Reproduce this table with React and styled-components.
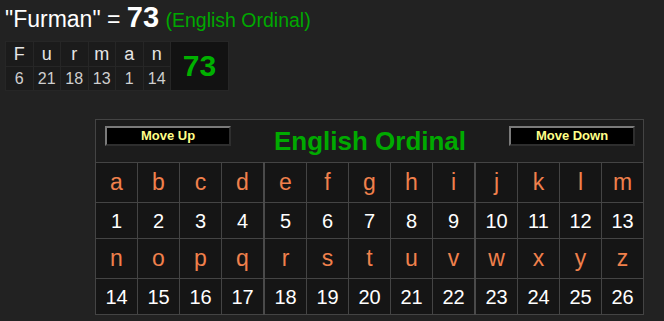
import React from "react";
import styled, { createGlobalStyle } from "styled-components";

const Global = createGlobalStyle`
  html, body {
    margin: 0;
    background: #222222;
    font-family: "Liberation Sans", Arial, sans-serif;
  }
  #root {
    padding: 0 5px;
  }
`;

const Heading = styled.div`
  color: #ffffff;
  font-size: 23px;
  line-height: 34px;
  height: 36px;
  white-space: nowrap;
`;

const Total = styled.b`
  font-size: 29px;
`;

const CipherName = styled.span`
  color: #00a800;
  font-size: 19.5px;
`;

const WordTable = styled.table`
  border-collapse: collapse;
  table-layout: fixed;
  margin-top: 5px;
  background: #1b1b1b;
`;

const WordCell = styled.td`
  width: 26.5px;
  padding: 0;
  border: 1px solid #262626;
  text-align: center;
  color: ${(p) => (p.$num ? "#cfcfcf" : "#e6e6e6")};
  font-size: ${(p) => (p.$num ? "16px" : "18px")};
  height: ${(p) => (p.$num ? "23px" : "24px")};
  line-height: 1;
`;

const WordSum = styled.td`
  width: 57px;
  padding: 0;
  border: 1px solid #262626;
  background: #121212;
  color: #00b000;
  font-weight: bold;
  font-size: 30px;
  text-align: center;
`;

const Chart = styled.table`
  border-collapse: collapse;
  table-layout: fixed;
  margin: 28px 0 0 90px;
  border: 1px solid #444444;
  background: #151515;
`;

const HeaderCell = styled.td`
  padding: 0;
  background: #1c1c1c;
  border: 1px solid #444444;
`;

const HeaderBar = styled.div`
  display: flex;
  align-items: flex-start;
  height: 42px;
  padding: 0 8px 0 9px;
`;

const MoveButton = styled.button`
  flex: none;
  width: 126px;
  height: 20px;
  margin-top: 6px;
  padding: 0;
  background: #000000;
  color: #ffff88;
  font-family: "Liberation Sans", Arial, sans-serif;
  font-weight: bold;
  font-size: 13px;
  line-height: 16px;
  border-style: solid;
  border-width: 2px;
  border-color: #7a7a7a #2e2e2e #2e2e2e #7a7a7a;
  cursor: pointer;
`;

const Title = styled.div`
  flex: 1;
  text-align: center;
  color: #00aa00;
  font-weight: bold;
  font-size: 26px;
  line-height: 42px;
`;

const Cell = styled.td`
  width: 41px;
  padding: 0;
  text-align: center;
  border: 1px solid #444444;
  border-left-width: ${(p) => (p.$groupStart ? "2px" : "1px")};
  border-left-color: ${(p) => (p.$groupStart ? "#4a4a4a" : "#444444")};
  height: ${(p) => (p.$num ? "35px" : "39px")};
  color: ${(p) => (p.$num ? "#ffffff" : "#f0804c")};
  font-size: ${(p) => (p.$num ? "20px" : "23px")};
  line-height: 1;
`;

const word = [
  ["F", 6],
  ["u", 21],
  ["r", 18],
  ["m", 13],
  ["a", 1],
  ["n", 14],
];

const alphabet = "abcdefghijklmnopqrstuvwxyz".split("");
const halves = [alphabet.slice(0, 13), alphabet.slice(13)];
const groupStarts = new Set([4, 9]);

export default function App() {
  return (
    <>
      <Global />
      <Heading>
        "Furman" = <Total>73</Total> <CipherName>(English Ordinal)</CipherName>
      </Heading>
      <WordTable>
        <tbody>
          <tr>
            {word.map(([ch]) => (
              <WordCell key={ch}>{ch}</WordCell>
            ))}
            <WordSum rowSpan={2}>73</WordSum>
          </tr>
          <tr>
            {word.map(([ch, n]) => (
              <WordCell key={ch} $num>
                {n}
              </WordCell>
            ))}
          </tr>
        </tbody>
      </WordTable>
      <Chart>
        <tbody>
          <tr>
            <HeaderCell colSpan={13}>
              <HeaderBar>
                <MoveButton>Move Up</MoveButton>
                <Title>English Ordinal</Title>
                <MoveButton>Move Down</MoveButton>
              </HeaderBar>
            </HeaderCell>
          </tr>
          {halves.map((letters, h) => (
            <React.Fragment key={h}>
              <tr>
                {letters.map((l, i) => (
                  <Cell key={l} $groupStart={groupStarts.has(i)}>
                    {l}
                  </Cell>
                ))}
              </tr>
              <tr>
                {letters.map((l, i) => (
                  <Cell key={l} $num $groupStart={groupStarts.has(i)}>
                    {h * 13 + i + 1}
                  </Cell>
                ))}
              </tr>
            </React.Fragment>
          ))}
        </tbody>
      </Chart>
    </>
  );
}
